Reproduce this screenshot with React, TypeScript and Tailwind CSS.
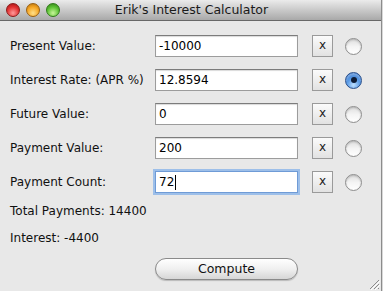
import React from "react";

const ROWS = [
  { label: "Present Value:", value: "-10000", selected: false },
  { label: "Interest Rate: (APR %)", value: "12.8594", selected: true },
  { label: "Future Value:", value: "0", selected: false },
  { label: "Payment Value:", value: "200", selected: false },
  { label: "Payment Count:", value: "72", selected: false, focused: true },
];

function Radio({ on }: { on: boolean }) {
  if (on) {
    return (
      <div className="w-[17px] h-[17px] rounded-full border border-[#2a4f8a] bg-[radial-gradient(circle_at_50%_80%,#bfe0ff_0%,#5a9be6_45%,#2d6cc4_100%)] flex items-center justify-center shadow-[inset_0_2px_2px_rgba(255,255,255,0.35)]">
        <div className="w-[6px] h-[6px] rounded-full bg-[#0d1c36]" />
      </div>
    );
  }
  return (
    <div className="w-[17px] h-[17px] rounded-full border border-[#8e8e8e] bg-gradient-to-b from-[#dedede] via-[#f4f4f4] to-[#ffffff] shadow-[inset_0_1px_2px_rgba(0,0,0,0.2)]" />
  );
}

export default function App() {
  return (
    <div className="w-[383px] h-[291px] bg-[#d8d8d8] overflow-hidden" style={{ fontFamily: '"DejaVu Sans", sans-serif' }}>
      <div className="w-[382px] h-[291px] border-r border-[#8c8c8c] bg-[#e8e8e8] flex flex-col relative">
        {/* Title bar */}
        <div className="h-[21px] flex items-center relative bg-gradient-to-b from-[#ebebeb] to-[#a9a9a9] border-b border-[#686868]">
          <div className="flex items-center gap-[6px] pl-[6px]">
            <div className="w-[14px] h-[14px] rounded-full border border-[#8a1a1a] bg-[radial-gradient(circle_at_50%_75%,#ff9a9a_0%,#e23232_55%,#9e1010_100%)]" />
            <div className="w-[14px] h-[14px] rounded-full border border-[#9a6010] bg-[radial-gradient(circle_at_50%_75%,#ffe08a_0%,#f5a623_55%,#b06c0c_100%)]" />
            <div className="w-[14px] h-[14px] rounded-full border border-[#2f7a1a] bg-[radial-gradient(circle_at_50%_75%,#c8f59a_0%,#5cc234_55%,#2d7a15_100%)]" />
          </div>
          <div className="absolute inset-0 flex items-center justify-center text-[12.5px] text-[#1a1a1a] pl-[2px]">
            Erik's Interest Calculator
          </div>
        </div>

        {/* Form rows */}
        <div className="flex flex-col gap-[12px] pt-[14px]">
          {ROWS.map((r) => (
            <div key={r.label} className="flex items-center h-[22px]">
              <div className="w-[155px] pl-[10px] text-[12px] text-[#111]">{r.label}</div>
              <div
                className={`w-[143px] h-[22px] bg-white flex items-center pl-[3px] text-[12px] text-black border ${
                  r.focused
                    ? "border-[#6f9bd6] shadow-[0_0_0_2px_#9dbfe9]"
                    : "border-[#9c9c9c] border-t-[#7c7c7c] shadow-[inset_0_1px_1px_rgba(0,0,0,0.15)]"
                }`}
              >
                {r.value}
                {r.focused && <span className="inline-block w-[1px] h-[15px] bg-black ml-[1px]" />}
              </div>
              <div className="ml-[14px] w-[21px] h-[22px] border border-[#9a9a9a] bg-gradient-to-b from-[#fbfbfb] to-[#e2e2e2] flex items-center justify-center text-[12px] text-[#222] leading-none pb-[2px]">
                x
              </div>
              <div className="ml-[12px]">
                <Radio on={r.selected} />
              </div>
            </div>
          ))}
        </div>

        <div className="pl-[10px] mt-[10px] text-[12px] text-[#111] leading-[16px]">Total Payments: 14400</div>
        <div className="pl-[10px] mt-[11px] text-[12px] text-[#111] leading-[16px]">Interest: -4400</div>

        <div className="flex pl-[155px] mt-[12px]">
          <div className="w-[143px] h-[22px] rounded-full border border-[#8a8a8a] bg-gradient-to-b from-[#ffffff] via-[#f0f0f0] to-[#d6d6d6] flex items-center justify-center text-[12.5px] text-[#111] shadow-[0_1px_1px_rgba(0,0,0,0.2)]">
            Compute
          </div>
        </div>

        {/* Resize grip */}
        <svg className="absolute right-[1px] bottom-[1px]" width="12" height="12" viewBox="0 0 12 12">
          <path d="M11 2 L2 11 M11 6 L6 11 M11 10 L10 11" stroke="#8a8a8a" strokeWidth="1" />
          <path d="M12 3 L3 12 M12 7 L7 12" stroke="#ffffff" strokeWidth="1" />
        </svg>
      </div>
    </div>
  );
}
